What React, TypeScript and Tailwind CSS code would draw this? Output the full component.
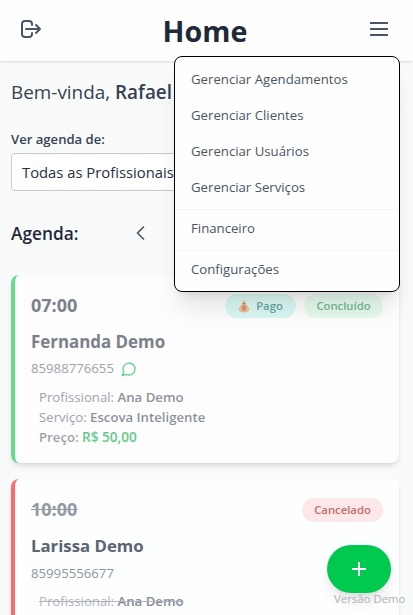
import React from "react";

const menuGroups = [
  ["Gerenciar Agendamentos", "Gerenciar Clientes", "Gerenciar Usuários", "Gerenciar Serviços"],
  ["Financeiro"],
  ["Configurações"],
];

function MoneyBag() {
  return (
    <svg width="12" height="13" viewBox="0 0 12 13" className="opacity-80">
      <path d="M4.300 1.200 6 .4l1.800.8L7.200 3.600c2 1.400 3.900 4 3.900 6 0 2-1.600 2.800-5.100 2.800S.9 11.600.9 9.600c0-2 1.800-4.600 3.900-6z" fill="#fbb070" />
      <path d="M4.500 3.600h3" stroke="#b5523b" strokeWidth="1" />
      <path d="M5 5.800v4.600M5 6h1.300a1 1 0 0 1 0 2.100H5h1.500a1.100 1.100 0 0 1 0 2.200H5" fill="none" stroke="#a8545a" strokeWidth="0.800" />
    </svg>
  );
}

function Header() {
  return (
    <header className="flex h-[61px] shrink-0 items-center justify-between bg-[#fefefe] pl-[19px] pr-[22px] text-[#4a5565] shadow">
      <button className="-mt-1">
        <svg width="24" height="24" viewBox="0 0 24 24" fill="none" stroke="currentColor" strokeWidth="2" strokeLinecap="round" strokeLinejoin="round">
          <path d="M17 16l4-4m0 0l-4-4m4 4H7m6 4v1a3 3 0 01-3 3H6a3 3 0 01-3-3V7a3 3 0 013-3h4a3 3 0 013 3v1" />
        </svg>
      </button>
      <h1 className="text-[28.700px] font-bold leading-9 text-[#1e2939]">Home</h1>
      <button className="-mt-1">
        <svg width="24" height="24" viewBox="0 0 24 24" fill="none" stroke="currentColor" strokeWidth="2">
          <path d="M3 6h18M3 12h18M3 18h18" />
        </svg>
      </button>
    </header>
  );
}

function Menu() {
  return (
    <nav className="absolute left-[174px] top-[56px] h-[236px] w-[226px] rounded-lg border border-black bg-[#fefefe] pt-1 text-[13.200px] text-[#4a5565] shadow-xl">
      {menuGroups.map((g, i) => (
        <div key={i} className={i ? "border-t border-[#f3f4f6]" : "pb-[4px]"}>
          {g.map((t) => (
            <div key={t} className={i ? "h-10 px-4 leading-9" : "h-9 px-4 leading-9"}>{t}</div>
          ))}
        </div>
      ))}
    </nav>
  );
}

function PaidCard() {
  return (
    <article className="h-[188px] shrink-0 rounded-lg border-l-4 border-[#65dc92] bg-[#fdfdfd] px-4 pt-4 text-[#9ea3ab] shadow-md">
      <div className="flex h-7 items-center justify-between">
        <span className="text-lg font-bold text-[#7b818b]">07:00</span>
        <div className="mt-px flex gap-2 text-[11.300px] font-semibold">
          <span className="flex h-6 w-[71px] items-center justify-center gap-1.5 rounded-full bg-[#d9f8f3] pt-px text-[#66a69c]"><MoneyBag />Pago</span>
          <span className="flex h-6 w-[79px] items-center justify-center rounded-full bg-[#e5faec] pt-px text-[#75b78e]">Concluído</span>
        </div>
      </div>
      <h3 className="mt-[9px] text-[16.900px] font-bold leading-7 text-[#7b818b]">Fernanda Demo</h3>
      <div className="mt-[3px] flex h-5 items-center gap-[7px] text-[13.200px]">
        <span>85988776655</span>
        <svg width="16" height="16" viewBox="0 0 24 24" fill="none" stroke="#65cf90" strokeWidth="2" strokeLinecap="round" strokeLinejoin="round">
          <path d="M7.900 20A9 9 0 1 0 4 16.100L2 22Z" />
        </svg>
      </div>
      <div className="ml-2 mt-2 text-[13.200px] leading-5">
        <p>Profissional: <b className="font-semibold text-[#8d939d]">Ana Demo</b></p>
        <p>Serviço: <b className="font-semibold text-[#8d939d]">Escova Inteligente</b></p>
        <p className="font-semibold">Preço: <b className="text-[13.600px] font-semibold leading-none text-[#65c98b]">R$ 50,00</b></p>
      </div>
    </article>
  );
}

function CanceledCard() {
  return (
    <article className="mt-4 h-[188px] shrink-0 rounded-lg border-l-4 border-[#ff6a70] bg-[#fdfefe] px-4 pt-4 text-[#8f96a1] shadow-md">
      <div className="flex h-7 items-center justify-between">
        <span className="text-lg font-bold text-[#949aa4] line-through">10:00</span>
        <span className="mt-px flex h-6 w-[81px] items-center justify-center rounded-full bg-[#fde8e9] pt-px text-[11.300px] font-semibold text-[#c36d6c]">Cancelado</span>
      </div>
      <h3 className="mt-[9px] text-[16.800px] font-bold leading-7 text-[#5b6472]">Larissa Demo</h3>
      <div className="mt-[3px] h-5 text-[13.200px] leading-5">85995556677</div>
      <p className="ml-2 mt-2 text-[13.200px] leading-5 text-[#b0b5bd] line-through">Profissional: <b className="font-semibold text-[#858c98]">Ana Demo</b></p>
    </article>
  );
}

export default function App() {
  return (
    <div className="relative flex h-[615px] w-full flex-col overflow-hidden bg-[#f9fbfb] font-['Open_Sans',sans-serif]">
      <Header />
      <main className="flex flex-col pl-[11px] pr-[14px] pt-[17px]">
        <p className="text-[18.900px] leading-7 text-[#364153]">Bem-vinda, <b className="font-semibold">Rafael</b></p>
        <label className="mt-[23px] text-[13.100px] font-semibold leading-5 text-[#364153]">Ver agenda de:</label>
        <div className="mt-[4px] h-[38px] rounded border border-[#c8cacd] bg-white px-[10px] text-[14.800px] leading-9 text-[#27303f]">Todas as Profissionais</div>
        <div className="mt-[28px] flex h-7 items-center">
          <h2 className="w-[118px] pt-0.5 text-[17.300px] font-semibold text-[#1e2939]">Agenda:</h2>
          <svg width="24" height="24" viewBox="0 0 24 24" fill="none" stroke="#4a5565" strokeWidth="1.600"><path d="M15 5.500 8.500 12 15 18.500" /></svg>
        </div>
        <div className="mt-[28px] flex flex-col">
          <PaidCard />
          <CanceledCard />
        </div>
      </main>
      <Menu />
      <button className="absolute left-[327px] top-[545px] flex h-12 w-16 items-center justify-center rounded-full bg-[#00c950] shadow-lg">
        <svg width="14" height="14" viewBox="0 0 14 14" stroke="white" strokeWidth="2"><path d="M7 0v14M0 7h14" /></svg>
      </button>
      <span className="absolute left-[334px] top-[591px] whitespace-nowrap text-[11.400px] leading-4 text-[#adb2b8]">Versão Demo</span>
    </div>
  );
}
